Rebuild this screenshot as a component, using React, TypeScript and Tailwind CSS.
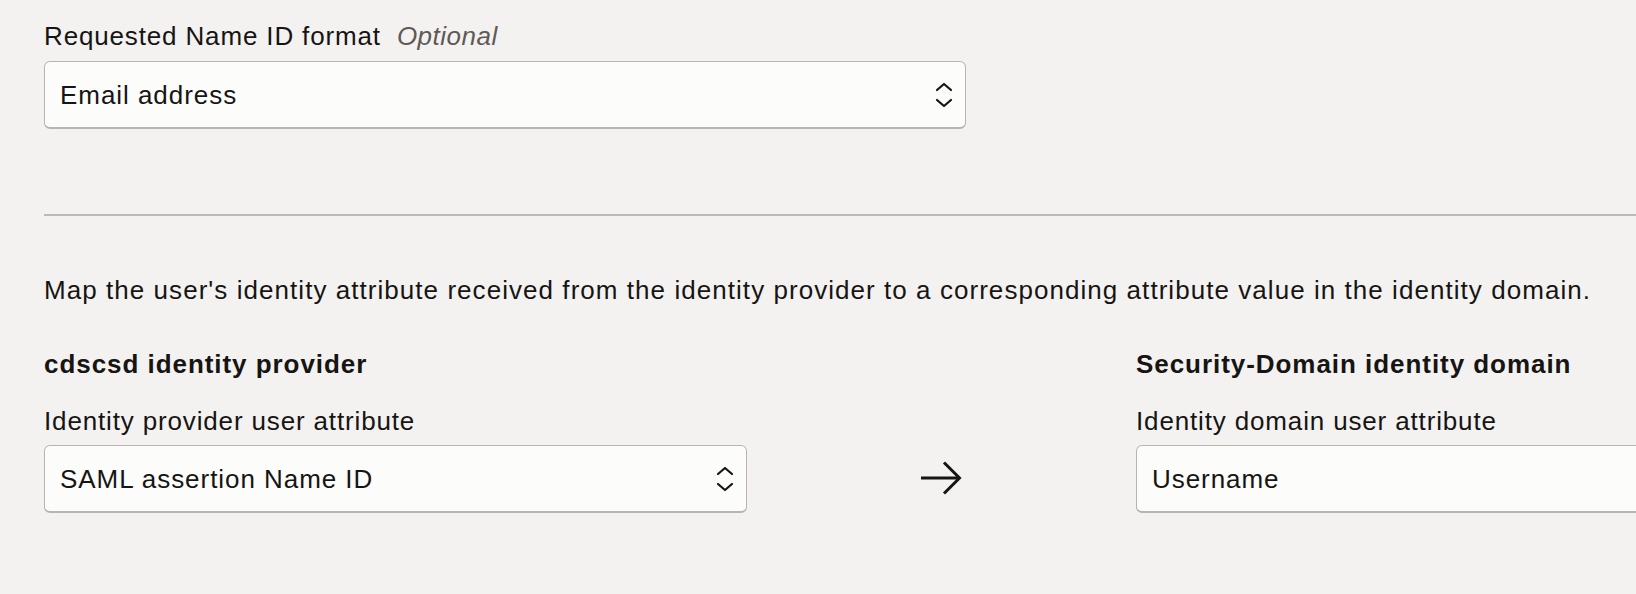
import { ReactNode } from "react";

function Chevrons() {
  return (
    <svg width="18" height="26" viewBox="0 0 18 26" fill="none" stroke="#161513" strokeWidth="2.2" strokeLinecap="round" strokeLinejoin="round">
      <path d="M2 8 L9 2 L16 8" />
      <path d="M2 18 L9 24 L16 18" />
    </svg>
  );
}

function SelectBox({ value, width, chevron = true }: { value: string; width: string; chevron?: boolean }) {
  return (
    <div
      className={`${width} h-[68px] shrink-0 flex items-center justify-between bg-[#fcfcfb] border border-[#bab4ae] border-b-2 rounded-[6px] pl-[15px] pr-[12px]`}
    >
      <span className="text-[26px] leading-[32px] tracking-[0.95px] text-[#161513]">{value}</span>
      {chevron && <Chevrons />}
    </div>
  );
}

function Label({ children }: { children: ReactNode }) {
  return <div className="text-[26px] leading-[32px] tracking-[0.85px] text-[#161513]">{children}</div>;
}

function Heading({ children }: { children: ReactNode }) {
  return <div className="text-[26px] leading-[32px] tracking-[0.95px] font-bold text-[#161513]">{children}</div>;
}

export default function App() {
  return (
    <div className="w-full h-[594px] overflow-hidden bg-[#f3f2f0] pl-[44px] pt-[20px] font-['Liberation_Sans',Arial,sans-serif]">
      {/* Requested Name ID format */}
      <div className="flex items-baseline gap-[16px]">
        <Label>Requested Name ID format</Label>
        <span className="text-[26px] leading-[32px] tracking-[0.5px] italic text-[#5e5a56]">Optional</span>
      </div>
      <div className="mt-[9px]">
        <SelectBox value="Email address" width="w-[922px]" />
      </div>

      <div className="mt-[85px] h-[2px] bg-[#bfb9b3]" />

      <p className="mt-[58px] text-[26px] leading-[32px] tracking-[1.05px] text-[#161513] whitespace-nowrap">
        Map the user's identity attribute received from the identity provider to a corresponding attribute value in the identity domain.
      </p>

      {/* Attribute mapping */}
      <div className="mt-[42px] grid grid-cols-[703px_389px_703px] items-end">
        <div>
          <Heading>cdscsd identity provider</Heading>
          <div className="mt-[25px]">
            <Label>Identity provider user attribute</Label>
          </div>
          <div className="mt-[8px]">
            <SelectBox value="SAML assertion Name ID" width="w-[703px]" />
          </div>
        </div>

        <div className="h-[68px] flex items-center justify-center">
          <svg width="44" height="36" viewBox="0 0 44 36" fill="none" stroke="#161513" strokeWidth="3" strokeLinecap="butt" strokeLinejoin="miter" className="-mt-[3px] -ml-[2px]">
            <path d="M2 18 H40" />
            <path d="M25 2.5 L40.5 18 L25 33.5" />
          </svg>
        </div>

        <div>
          <Heading>Security-Domain identity domain</Heading>
          <div className="mt-[25px]">
            <Label>Identity domain user attribute</Label>
          </div>
          <div className="mt-[8px]">
            <SelectBox value="Username" width="w-[703px]" chevron={false} />
          </div>
        </div>
      </div>
    </div>
  );
}
